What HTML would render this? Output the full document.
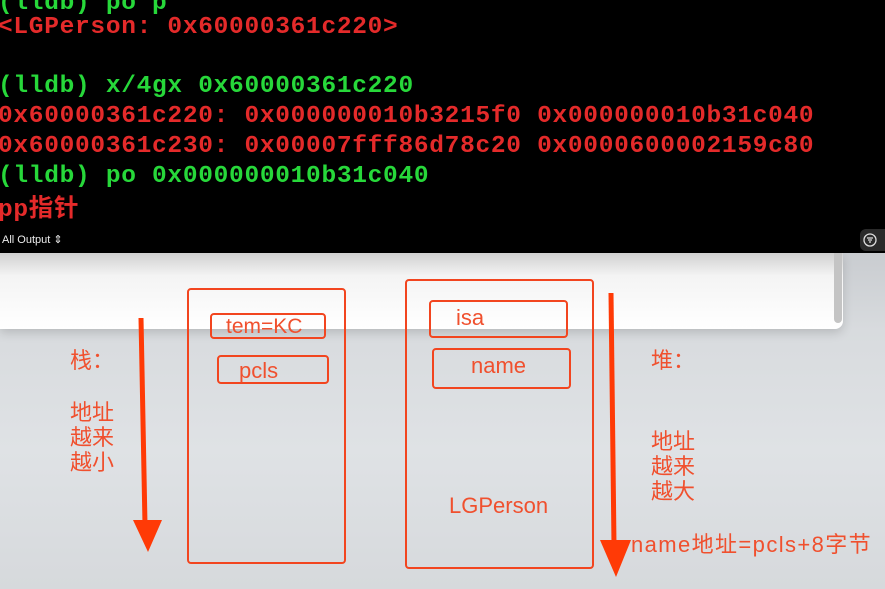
<!DOCTYPE html>
<html><head><meta charset="utf-8"><style>
*{margin:0;padding:0;box-sizing:border-box}
body{width:885px;height:589px;overflow:hidden;position:relative;background:linear-gradient(#c9ccd0 253px,#d8dbde 330px,#dfe2e5 450px,#d6d9dc 589px);font-family:"Liberation Sans","Noto Sans CJK SC",sans-serif}
#term{position:absolute;left:0;top:0;width:885px;height:253px;background:#000}
.l{position:absolute;left:-2px;font:bold 24.5px/30px "Liberation Mono","Noto Sans CJK SC",monospace;white-space:pre;letter-spacing:0.7px}
.g{color:#27d83a}.r{color:#e42a2a}
#ao{position:absolute;left:2px;top:233px;color:#eee;font-size:11px}
#btn{position:absolute;left:860px;top:229px;width:40px;height:22px;border-radius:6px;background:#2a2a2a}
#win{position:absolute;left:0;top:253px;width:843px;height:76px;background:linear-gradient(#d0d0d0,#f4f4f4 30%,#fff);border-radius:0 0 8px 0;box-shadow:0 4px 10px rgba(0,0,0,.15)}
#sb{position:absolute;left:834px;top:253px;width:8px;height:70px;background:#c4c4c4;border-radius:0 0 4px 4px}
.b{position:absolute;border:2.5px solid #f2451f;border-radius:4px}
.t{position:absolute;color:#f0502e;font-size:22px;white-space:nowrap}
.c{position:absolute;color:#f0502e;font-size:22px;line-height:25px}
</style></head><body>
<div id="term">
<div class="l g" style="top:-11px">(lldb) po p</div>
<div class="l r" style="top:13px">&lt;LGPerson: 0x60000361c220&gt;</div>
<div class="l g" style="top:72px">(lldb) x/4gx 0x60000361c220</div>
<div class="l r" style="top:102px">0x60000361c220: 0x000000010b3215f0 0x000000010b31c040</div>
<div class="l r" style="top:132px">0x60000361c230: 0x00007fff86d78c20 0x0000600002159c80</div>
<div class="l g" style="top:162px">(lldb) po 0x000000010b31c040</div>
<div class="l r" style="top:196px">pp指针</div>
<div id="ao">All Output ⇕</div>
<div id="btn"><svg width="20" height="22" viewBox="0 0 20 22"><circle cx="10" cy="11" r="6" fill="none" stroke="#ddd" stroke-width="1.3"/><path d="M7 9h6M8 11h4M9 13h2" stroke="#ddd" stroke-width="1.2"/></svg></div>
</div>
<div id="win"></div><div id="sb"></div>
<div class="b" style="left:187px;top:288px;width:159px;height:276px"></div>
<div class="b" style="left:210px;top:313px;width:116px;height:26px"></div>
<div class="b" style="left:217px;top:355px;width:112px;height:29px"></div>
<div class="b" style="left:405px;top:279px;width:189px;height:290px"></div>
<div class="b" style="left:429px;top:300px;width:139px;height:38px"></div>
<div class="b" style="left:432px;top:348px;width:139px;height:41px"></div>
<svg style="position:absolute;left:0;top:0" width="885" height="589">
<path d="M141 318 L145 525" stroke="#ff3a06" stroke-width="5" fill="none"/>
<path d="M133 520 L162 520 L148 552Z" fill="#ff3a06"/>
<path d="M611 293 L614 545" stroke="#ff3a06" stroke-width="5" fill="none"/>
<path d="M600 540 L631 540 L616 577Z" fill="#ff3a06"/>
</svg>
<div class="t" style="left:226px;top:315px;font-size:21px">tem=KC</div>
<div class="t" style="left:239px;top:358px">pcls</div>
<div class="t" style="left:456px;top:305px">isa</div>
<div class="t" style="left:471px;top:353px">name</div>
<div class="t" style="left:449px;top:493px">LGPerson</div>
<div class="t" style="left:631px;top:527px;font-size:22px;letter-spacing:1.4px">name地址=pcls+8字节</div>
<div class="c" style="left:70px;top:348px">栈：</div>
<div class="c" style="left:70px;top:400px">地址<br>越来<br>越小</div>
<div class="c" style="left:651px;top:348px">堆：</div>
<div class="c" style="left:651px;top:429px">地址<br>越来<br>越大</div>
</body></html>
